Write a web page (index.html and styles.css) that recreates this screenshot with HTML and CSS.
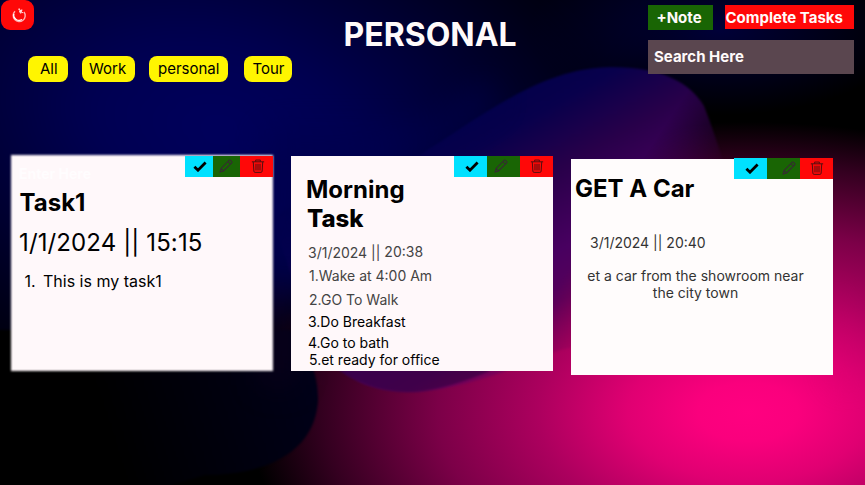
FILE: index.html
```
<!DOCTYPE html>
<html lang="en">
<head>
<meta charset="utf-8">
<title>Personal notes</title>
<link rel="stylesheet" href="styles.css">
</head>
<body>
<svg class="backdrop" viewBox="0 0 865 485" preserveAspectRatio="none" aria-hidden="true">
  <defs>
    <radialGradient id="pink" gradientUnits="userSpaceOnUse" cx="0" cy="0" r="1" gradientTransform="translate(748 412) scale(500 290)">
      <stop offset="0" stop-color="#ff0080"/><stop offset=".1" stop-color="#fa007d"/><stop offset=".24" stop-color="#e00072"/><stop offset=".42" stop-color="#ac005e"/><stop offset=".62" stop-color="#7c0048"/><stop offset=".85" stop-color="#340020"/><stop offset="1" stop-color="#000"/>
    </radialGradient>
    <radialGradient id="navy" gradientUnits="userSpaceOnUse" cx="0" cy="0" r="1" gradientTransform="translate(220 130) rotate(14) scale(430 270)">
      <stop offset="0" stop-color="#00005c"/><stop offset=".3" stop-color="#000052"/><stop offset=".6" stop-color="#000036"/><stop offset="1" stop-color="#000010"/>
    </radialGradient>
    <linearGradient id="violet" gradientUnits="userSpaceOnUse" x1="480" y1="80" x2="640" y2="360">
      <stop offset="0" stop-color="#00004a"/><stop offset=".18" stop-color="#08004c"/><stop offset=".36" stop-color="#28004a"/><stop offset=".58" stop-color="#480060"/><stop offset=".72" stop-color="#58005a"/><stop offset=".87" stop-color="#900058"/><stop offset="1" stop-color="#b00064"/>
    </linearGradient>
    <linearGradient id="low" gradientUnits="userSpaceOnUse" x1="110" y1="440" x2="310" y2="375">
      <stop offset="0" stop-color="#000"/><stop offset="1" stop-color="#000018"/>
    </linearGradient>
    <linearGradient id="fade" gradientUnits="userSpaceOnUse" x1="675" y1="110" x2="735" y2="150">
      <stop offset="0" stop-color="#fff"/><stop offset="1" stop-color="#000"/>
    </linearGradient>
    <mask id="melt" maskUnits="userSpaceOnUse" x="0" y="0" width="865" height="485"><rect width="865" height="485" fill="url(#fade)"/></mask>
    <radialGradient id="glow"><stop offset="0" stop-color="#000038"/><stop offset="1" stop-color="#000038" stop-opacity="0"/></radialGradient>
    <filter id="soft" color-interpolation-filters="sRGB" filterUnits="userSpaceOnUse" x="-100" y="-100" width="1100" height="700"><feGaussianBlur stdDeviation="16"/></filter>
    <filter id="edge" color-interpolation-filters="sRGB" filterUnits="userSpaceOnUse" x="-100" y="-100" width="1100" height="700"><feGaussianBlur stdDeviation="1"/></filter>
  </defs>
  <rect width="865" height="485" fill="#000"/>
  <rect width="865" height="485" fill="url(#pink)"/>
  <path d="M-60 -60H700L640 60L560 130L430 180L320 300L260 330L-60 360Z" fill="url(#navy)" filter="url(#soft)"/>
  <ellipse cx="720" cy="30" rx="190" ry="85" fill="url(#glow)"/>
  <g mask="url(#melt)">
    <path d="M420 155C490 110 545 67 612 67C660 67 690 82 704 106C722 150 740 230 790 300L560 350Q460 392 410 392C370 392 345 378 325 355L300 300L272 220Q340 165 420 155Z" fill="url(#violet)" filter="url(#edge)"/>
  </g>
  <path d="M265 130H430L480 85L500 100L430 145L330 180L300 280H265Z" fill="#00004e" opacity=".75" filter="url(#soft)"/>
  <path d="M330 365H480L490 371Q440 392 408 392Q368 392 330 365Z" fill="#300040" opacity=".6" filter="url(#edge)"/>
  <path d="M-20 330H290C308 355 318 370 318 400C316 440 285 474 205 475L120 500H-20Z" fill="url(#low)" filter="url(#edge)"/>
  <path d="M262 290H294V385H262Z" fill="#10001e" opacity=".6" filter="url(#soft)"/>
  <path d="M833 278Q850 305 865 352V385H833Z" fill="#d00070" opacity=".3" filter="url(#soft)"/>
</svg>

<div class="page">
  <header class="top">
    <div class="left">
      <button class="power" aria-label="Refresh">
        <svg width="16" height="16" viewBox="0 0 16 16" fill="none"><path d="M4 4.3A6 6 0 1 0 13 5" stroke="#ffb0b0" stroke-width="1.4"/><path d="M2.8 7A5.4 5.4 0 0 0 11 12.5" stroke="#fff" stroke-width="1.3"/><path d="M8 1.5L9 5.5M7.5 2L12 5.7M11 2.5L9.5 6.5" stroke="#ffdada" stroke-width="1.2"/></svg>
      </button>
      <nav class="tags">
        <span class="tag all">All</span><span class="tag work">Work</span><span class="tag personal">personal</span><span class="tag tour">Tour</span>
      </nav>
    </div>
    <h1>PERSONAL</h1>
    <div class="right">
      <div class="actions"><span class="add">+Note</span><span class="done">Complete Tasks</span></div>
      <div class="search">Search Here</div>
    </div>
  </header>

  <main class="cards">
    <article class="card one">
      <div class="tools"><span class="ok"><svg class="check" viewBox="0 0 14 11"><path d="M1.4 5.7L5 9.2L12.6 1.6"/></svg></span><span class="edit"><svg class="ico" viewBox="0 0 16 16"><use href="#pencil"/></svg></span><span class="del"><svg class="ico" viewBox="0 0 16 16"><use href="#trash"/></svg></span></div>
      <p class="ghost">Enter Here</p>
      <h2>Task1</h2>
      <p class="bigdate">1/1/2024 || 15:15</p>
      <p class="item"><span class="num">1.</span>This is my task1</p>
    </article>
    <article class="card two">
      <div class="tools"><span class="ok"><svg class="check" viewBox="0 0 14 11"><path d="M1.4 5.7L5 9.2L12.6 1.6"/></svg></span><span class="edit"><svg class="ico" viewBox="0 0 16 16"><use href="#pencil"/></svg></span><span class="del"><svg class="ico" viewBox="0 0 16 16"><use href="#trash"/></svg></span></div>
      <h2>Morning<br><span class="heavy">Task</span></h2>
      <p class="date">3/1/2024 || <span class="time">20:38</span></p>
      <p class="line l1 grey">1.Wake at 4:00 Am</p>
      <p class="line l2 grey">2.GO To Walk</p>
      <p class="line l3">3.Do Breakfast</p>
      <p class="line l4">4.Go to bath</p>
      <p class="line l5">5.et ready for office</p>
    </article>
    <article class="card three">
      <div class="tools"><span class="ok"><svg class="check" viewBox="0 0 14 11"><path d="M1.4 5.7L5 9.2L12.6 1.6"/></svg></span><span class="edit"><svg class="ico" viewBox="0 0 16 16"><use href="#pencil"/></svg></span><span class="del"><svg class="ico" viewBox="0 0 16 16"><use href="#trash"/></svg></span></div>
      <h2>GET A Car</h2>
      <p class="date">3/1/2024 || 20:40</p>
      <p class="text">et a car from the showroom near the city town</p>
    </article>
  </main>
</div>

<svg class="defs" width="0" height="0" aria-hidden="true">
  <symbol id="pencil" viewBox="0 0 16 16"><path d="M1.2 14.8L2.3 10.8L11.7 1.4Q12.3 .8 12.9 1.4L14.6 3.1Q15.2 3.7 14.6 4.3L5.2 13.7ZM10.2 3L13 5.8M2.3 10.8L5.2 13.7" fill="none" stroke="#352c30" stroke-width="1.2"/></symbol>
  <symbol id="trash" viewBox="0 0 16 16"><path d="M1 3.2H15M5.3 3V1.2H10.7V3M2.6 3.4L3.3 14Q3.4 15.3 4.7 15.3H11.3Q12.6 15.3 12.7 14L13.4 3.4M5.7 5.5V13M8 5.5V13M10.3 5.5V13" fill="none" stroke="#4c1010" stroke-width="1.1"/></symbol>
</svg>
</body>
</html>
```
FILE: styles.css
```
* { box-sizing: border-box; }
body { margin: 0; background: #000; font-family: Inter, "Liberation Sans", sans-serif; color: #000; overflow: hidden; }
h1, h2, p { margin: 0; }
.backdrop { position: absolute; inset: 0; width: 865px; height: 485px; }
.defs { position: absolute; }
.page { position: relative; width: 865px; height: 485px; }

.top { display: flex; height: 155px; }
.left { width: 343.5px; padding-left: 1px; }
.power { display: flex; align-items: center; justify-content: center; width: 33px; height: 30px; padding: 0 0 0 3px; border: 0; border-radius: 9px; background: #ff0808; }
.tags { display: flex; margin: 26px 0 0 27px; }
.tag { height: 26px; border-radius: 8px; background: #fff500; font-size: 15px; line-height: 26px; white-space: nowrap; }
.all { width: 40px; margin-right: 14px; padding-left: 12px; }
.work { width: 53px; margin-right: 14px; padding-left: 7px; }
.personal { width: 79px; margin-right: 16px; padding-left: 9px; }
.tour { width: 48px; padding-left: 8.5px; }
h1 { width: 304.5px; padding-top: 15px; font-size: 32px; line-height: 39px; font-weight: 700; color: #fffafa; }
.right { width: 206px; padding-top: 5px; }
.actions { display: flex; justify-content: space-between; height: 35px; color: #fffafa; font-size: 15px; font-weight: 700; line-height: 25px; white-space: nowrap; }
.add { width: 65px; height: 25px; padding-left: 8.5px; background: #196504; }
.done { width: 129px; height: 24px; padding-left: .5px; background: #ff0808; }
.search { height: 34px; padding-left: 6px; background: #5a464f; color: #fffafa; font-size: 15px; font-weight: 700; line-height: 34px; }

.cards { display: grid; grid-template-columns: 262px 262px 262px; column-gap: 18px; align-items: start; padding: 1px 0 0 11px; }
.card { position: relative; height: 215px; background: #fff8fa; }
.card h2 { font-size: 24px; line-height: 29px; font-weight: 700; }
.card.one { z-index: 0; background: none; padding: 8px 0 0 8px; }
.one::before { content: ""; position: absolute; inset: -1px 0 0 0; z-index: -1; background: #fff8fa; filter: blur(1.3px); }
.card.three { height: 216px; margin-top: 3px; background: #fffcfc; }
.ghost { font-size: 14px; font-weight: 700; line-height: 20px; color: #fffdfe; }
.one h2 { margin-top: 4px; line-height: 30px; padding-left: .5px; }
.bigdate { margin-top: 10px; font-size: 24px; line-height: 30px; letter-spacing: .12px; }
.item { display: flex; margin-top: 13px; padding-left: 5.5px; font-size: 16px; line-height: 20px; }
.num { width: 18.5px; }

.two { padding: 19px 0 0 15px; }
.heavy { font-weight: 800; padding-left: 1px; }
.date { font-size: 14px; line-height: 17px; color: #444; }
.two .date { margin: 11px 0 0 2px; }
.time { position: relative; top: -1px; }
.line { margin-left: 3px; font-size: 14px; line-height: 17px; }
.grey { color: #444; }
.l1 { margin-top: 6px; }
.l2 { margin-top: 7px; }
.l3 { margin: 5px 0 0 2px; }
.l4 { margin: 4px 0 0 2px; }

.three { padding: 15px 0 0 4px; }
.three .date { margin: 31px 0 0 15px; color: #333; }
.text { width: 241px; margin-top: 16px; font-size: 14px; line-height: 17px; color: #333; text-align: center; }

.tools { position: absolute; top: 0; right: 0; display: flex; height: 21px; }
.three .tools { top: -1px; }
.tools span { display: block; width: 33px; height: 21px; }
.ok { background: #00e1ff; }
.edit { background: #196504; }
.del { background: #ff0808; }
.one .tools .ok { width: 28px; }
.one .tools .edit { width: 27px; }
.check { display: block; width: 14px; height: 11px; margin: 5px 0 0 11px; fill: none; stroke: #000; stroke-width: 2.8; }
.one .check { margin-left: 8px; }
.ico { display: block; width: 14px; height: 14px; margin: 3px 0 0 11px; }
.edit .ico { margin-left: 7px; }
.one .edit .ico { margin-left: 6px; }
.three .edit .ico { margin-left: 15px; }
.two .del .ico { margin-left: 10px; }
.three .del .ico { margin-left: 10px; }
```
